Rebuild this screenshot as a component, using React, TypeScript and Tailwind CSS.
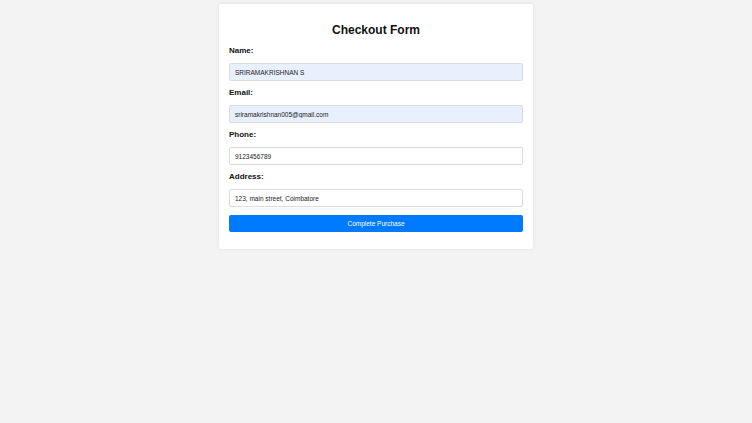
import { useState } from 'react'

const FIELDS = [
  { id: 'name', label: 'Name:', value: 'SRIRAMAKRISHNAN S', filled: true },
  { id: 'email', label: 'Email:', value: 'sriramakrishnan005@gmail.com', filled: true },
  { id: 'phone', label: 'Phone:', value: '9123456789', filled: false },
  { id: 'address', label: 'Address:', value: '123, main street, Coimbatore', filled: false },
]

export default function App() {
  const [values, setValues] = useState<Record<string, string>>(
    Object.fromEntries(FIELDS.map((f) => [f.id, f.value]))
  )

  return (
    <div className="min-h-[423px] bg-[#f3f3f3] pt-[4px] font-['Liberation_Sans',Arial,sans-serif]">
      <div className="mx-auto w-[314px] rounded-[3px] bg-white px-[10px] pt-[10px] pb-[17px] shadow-[0_0_4px_rgba(0,0,0,0.08)]">
        <h2 className="mt-[8px] h-[16px] text-center text-[12px] leading-[16px] font-bold text-[#111]">Checkout Form</h2>
        <form onSubmit={(e) => e.preventDefault()}>
          {FIELDS.map((f, i) => (
            <div key={f.id}>
              <label htmlFor={f.id} className={`block h-[12px] text-[8px] leading-[12px] font-bold text-[#111] ${i === 0 ? 'mt-[7px]' : 'mt-[6px]'}`}>
                {f.label}
              </label>
              <input
                id={f.id}
                value={values[f.id]}
                onChange={(e) => setValues({ ...values, [f.id]: e.target.value })}
                className={`mt-[6px] block h-[18px] w-full rounded-[2px] border border-[#dcdcdc] px-[5px] text-[6.5px] text-[#222] outline-none ${f.filled ? 'bg-[#e8f0fe]' : 'bg-white'}`}
              />
            </div>
          ))}
          <button type="submit" className="mt-[8px] block h-[17px] w-full rounded-[2px] bg-[#007bff] text-[6.5px] text-white">
            Complete Purchase
          </button>
        </form>
      </div>
    </div>
  )
}
